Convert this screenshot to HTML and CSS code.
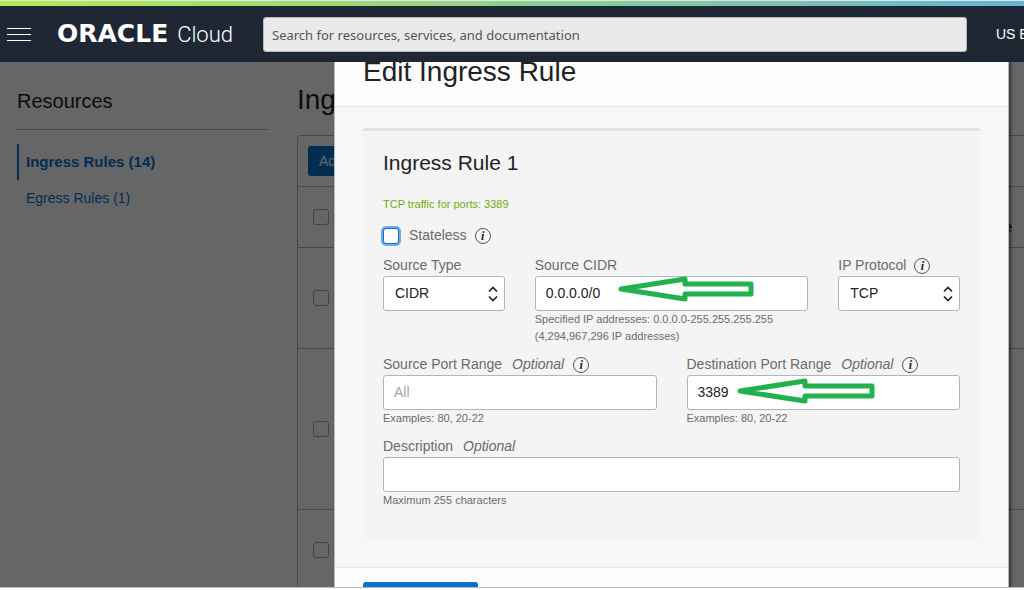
FILE: index.html
```
<!DOCTYPE html>
<html lang="en">
<head>
<meta charset="utf-8">
<title>Oracle Cloud - Edit Ingress Rule</title>
<meta name="viewport" content="width=device-width, initial-scale=1">
<link rel="stylesheet" href="styles.css">
</head>
<body>
<div class="accent"></div>
<header class="topbar">
  <button class="burger" type="button" aria-label="Menu"><span></span><span></span><span></span></button>
  <a class="logo" href="#"><span class="logo-brand">ORACLE</span><span class="logo-product">Cloud</span></a>
  <input class="search" type="search" aria-label="Search" placeholder="Search for resources, services, and documentation">
  <span class="region">US East</span>
</header>

<main class="stage">
  <div class="page">
    <nav class="sidebar">
      <h2 class="sidebar-title">Resources</h2>
      <a class="side-link active" href="#">Ingress Rules (14)</a>
      <a class="side-link" href="#">Egress Rules (1)</a>
    </nav>
    <section class="rules">
      <h1 class="rules-title">Ingress Rules</h1>
      <div class="panel">
        <div class="toolbar"><button class="primary" type="button">Add</button></div>
        <table class="rules-table">
          <tr class="row-head"><td><input class="check" type="checkbox" aria-label="Select all"></td><th>Range</th></tr>
          <tr class="row-medium"><td><input class="check" type="checkbox" aria-label="Select rule 1"></td><td></td></tr>
          <tr class="row-tall"><td><input class="check" type="checkbox" aria-label="Select rule 2"></td><td></td></tr>
          <tr class="row-last"><td><input class="check" type="checkbox" aria-label="Select rule 3"></td><td></td></tr>
        </table>
      </div>
    </section>
  </div>
  <div class="backdrop"></div>

  <div class="dialog" role="dialog" aria-labelledby="dialog-title">
    <div class="dialog-head"><h1 class="dialog-title" id="dialog-title">Edit Ingress Rule</h1></div>
    <div class="dialog-body">
      <form class="card">
        <h2 class="card-title">Ingress Rule 1</h2>
        <p class="summary">TCP traffic for ports: 3389</p>
        <div class="stateless">
          <input class="check focused" type="checkbox" id="stateless">
          <label for="stateless">Stateless</label>
          <button class="info" type="button" aria-label="About stateless">i</button>
        </div>
        <div class="fields">
          <div class="field">
            <div class="label-row"><label for="source-type">Source Type</label></div>
            <div class="control">
              <select class="box" id="source-type"><option>CIDR</option></select>
              <svg class="chevrons" width="10" height="16" viewBox="0 0 10 16"><path d="M1 5.5 5 1.5 9 5.5M1 10.5 5 14.5 9 10.5"/></svg>
            </div>
          </div>
          <div class="field wide">
            <div class="label-row"><label for="source-cidr">Source CIDR</label></div>
            <div class="control">
              <input class="box" id="source-cidr" type="text" value="0.0.0.0/0">
              <svg class="arrow arrow-cidr" width="138" height="26" viewBox="0 0 138 26"><path d="M4 13 68 3V8H134V18H68V23Z"/></svg>
            </div>
            <p class="hint">Specified IP addresses: 0.0.0.0-255.255.255.255<br>(4,294,967,296 IP addresses)</p>
          </div>
          <div class="field">
            <div class="label-row"><label for="protocol">IP Protocol</label><button class="info" type="button" aria-label="About IP protocol">i</button></div>
            <div class="control">
              <select class="box" id="protocol"><option>TCP</option></select>
              <svg class="chevrons" width="10" height="16" viewBox="0 0 10 16"><path d="M1 5.5 5 1.5 9 5.5M1 10.5 5 14.5 9 10.5"/></svg>
            </div>
          </div>
          <div class="field wide">
            <div class="label-row"><label for="source-port">Source Port Range</label><em>Optional</em><button class="info" type="button" aria-label="About source port range">i</button></div>
            <div class="control"><input class="box" id="source-port" type="text" placeholder="All"></div>
            <p class="hint">Examples: 80, 20-22</p>
          </div>
          <div class="field wide">
            <div class="label-row"><label for="dest-port">Destination Port Range</label><em>Optional</em><button class="info" type="button" aria-label="About destination port range">i</button></div>
            <div class="control">
              <input class="box" id="dest-port" type="text" value="3389">
              <svg class="arrow arrow-port" width="140" height="26" viewBox="0 0 140 26"><path d="M4 13 69 3V8H136V18H69V23Z"/></svg>
            </div>
            <p class="hint">Examples: 80, 20-22</p>
          </div>
          <div class="field full">
            <div class="label-row"><label for="description">Description</label><em>Optional</em></div>
            <div class="control"><input class="box" id="description" type="text"></div>
            <p class="hint">Maximum 255 characters</p>
          </div>
        </div>
      </form>
    </div>
    <div class="dialog-foot"><button class="save" type="button" aria-label="Save"></button></div>
  </div>
</main>
</body>
</html>
```
FILE: styles.css
```
* { box-sizing: border-box; }

body {
  margin: 0;
  height: 100vh;
  display: flex;
  flex-direction: column;
  overflow: hidden;
  background: #fff;
  color: #222;
  font: 14px/20px "Liberation Sans", Arial, sans-serif;
}

h1, h2, p { margin: 0; font-weight: 400; }
a { text-decoration: none; }
button, input, select { font: inherit; margin: 0; }

.accent {
  flex: none;
  height: 6px;
  border-top: 1px solid #e4e4e4;
  background: linear-gradient(90deg, #b4ec51, #99da78 33%, #7cc4b0 75%, #68b2d8);
}

/* Top bar */
.topbar {
  flex: none;
  height: 56px;
  padding-left: 7px;
  display: flex;
  align-items: center;
  background: #1e2733;
  color: #fff;
}
.burger {
  width: 24px;
  height: 13px;
  margin-right: 26px;
  padding: 0;
  border: 0;
  background: none;
  display: flex;
  flex-direction: column;
  justify-content: space-between;
}
.burger span { width: 100%; height: 1px; background: #fff; }
.logo {
  width: 176px;
  margin-right: 30px;
  display: flex;
  align-items: baseline;
  justify-content: space-between;
  color: #fff;
  line-height: 28px;
}
.logo-brand { font-family: "DejaVu Sans", sans-serif; font-size: 25px; font-weight: 700; }
.logo-product { font-family: Roboto, sans-serif; font-size: 22px; font-weight: 300; }
.search {
  flex: 1;
  min-width: 0;
  height: 35px;
  padding: 2px 8px 0;
  appearance: none;
  border: 1px solid #b4b9c1;
  border-radius: 3px;
  background: #eaeaea;
  font-family: "Noto Sans", sans-serif;
  font-size: 13px;
}
.search::placeholder { color: #555; opacity: 1; }
.region { width: 28px; margin-left: 29px; overflow: hidden; white-space: nowrap; }

/* Page under the dialog */
.stage { position: relative; flex: 1; min-height: 0; overflow: hidden; border-bottom: 1px solid #b5b9c0; margin-bottom: 2px; }
.page { height: 100%; padding: 0 0 0 17px; display: flex; gap: 28px; }
.sidebar { flex: none; width: 252px; padding-top: 24px; display: flex; flex-direction: column; }
.sidebar-title { padding-bottom: 13px; margin-bottom: 14px; border-bottom: 1px solid #b5b9c0; font-size: 20px; line-height: 30px; }
.side-link { padding: 8px 9px; color: #0572ce; }
.side-link.active { padding-left: 7px; border-left: 2px solid #0572ce; font-size: 15px; font-weight: 700; }
.rules { flex: 1; min-width: 0; padding-top: 20px; }
.rules-title { font-size: 28px; line-height: 36px; margin-bottom: 17px; }
.panel { border: 1px solid #b5b9c0; border-right: 0; border-top-left-radius: 3px; }
.toolbar { height: 50px; padding: 10px; }
.primary { height: 30px; padding: 0 11px; border: 0; border-radius: 3px; background: #0572ce; color: #fff; }
.rules-table { width: 100%; border-collapse: collapse; }
.rules-table td, .rules-table th { padding: 0 15px; border-top: 1px solid #b5b9c0; }
.rules-table th { padding-right: 12px; text-align: right; font-weight: 700; padding-top: 20px; }
.rules-table .check { display: block; }
.row-head { height: 61px; }
.row-medium { height: 101px; }
.row-tall { height: 161px; }
.row-last { height: 81px; }
.backdrop { position: absolute; inset: 0; background: rgba(0, 0, 0, .6); }

.check {
  flex: none;
  width: 16px;
  height: 16px;
  appearance: none;
  border: 1px solid #a5a9b2;
  border-radius: 3px;
  background: #fff;
}
.check.focused { border-color: #0572ce; box-shadow: 0 0 0 2px #74aae2; }

/* Dialog */
.dialog {
  position: absolute;
  inset: 0 15px auto 334px;
  border: solid #b5b9c0;
  border-width: 0 1px;
  background: #f7f7f7;
  box-shadow: 2px 0 3px rgba(0, 0, 0, .5);
}
.dialog-head { height: 45px; padding: 0 28px; display: flex; align-items: flex-end; border-bottom: 1px solid #e4e4e6; background: #fcfcfc; }
.dialog-title { padding-bottom: 16px; font-size: 28px; line-height: 36px; }
.dialog-body { padding: 21px 28px 27px; }
.card { padding: 20px 20px 31px; border-top: 3px solid #e1e2e6; border-radius: 3px; background: #f4f4f4; }
.card-title { margin-bottom: 21px; font-size: 21px; line-height: 24px; }
.summary { margin-bottom: 13px; color: #6fae0a; font-size: 11px; line-height: 17px; }
.stateless { display: flex; align-items: center; height: 20px; margin-bottom: 10px; color: #6b6b6b; }
.stateless label { margin-left: 10px; padding-bottom: 2px; }
.info {
  flex: none;
  width: 16px;
  height: 16px;
  margin-left: 8px;
  padding: 0;
  border: 1px solid #555;
  border-radius: 50%;
  background: none;
  color: #222;
  font: italic 700 12px/13px "Liberation Serif", serif;
}
.fields { display: grid; grid-template-columns: repeat(4, 1fr); gap: 10px 30px; }
.field { min-width: 0; }
.wide { grid-column: span 2; }
.full { grid-column: 1 / -1; }
.label-row { height: 20px; display: flex; align-items: center; color: #6b6b6b; white-space: nowrap; }
.label-row label, .label-row em { padding-bottom: 2px; }
.label-row em { margin-left: 10px; }
.label-row em + .info { margin-left: 9px; }
.control { position: relative; }
.box {
  display: block;
  width: 100%;
  height: 35px;
  padding: 0 10px 2px;
  appearance: none;
  border: 1px solid #b0b4be;
  border-radius: 3px;
  background: #fff;
  color: #222;
}
select.box { padding-left: 11px; }
.box::placeholder { color: #a5a5a5; opacity: 1; }
.chevrons { position: absolute; top: 10px; right: 7px; fill: none; stroke: #222; stroke-width: 1.7; pointer-events: none; }
.arrow { position: absolute; fill: none; stroke: #22b14c; stroke-width: 5; stroke-linejoin: round; pointer-events: none; }
.arrow-cidr { top: 0; left: 82px; }
.arrow-port { top: 3px; left: 49px; }
.hint { color: #6b6b6b; font-size: 11px; line-height: 17px; }
.dialog-foot { height: 60px; padding: 14px 28px; border-top: 1px solid #e4e4e6; background: #fcfcfc; }
.save { width: 115px; height: 32px; border: 0; border-radius: 3px; background: #0572ce; }
```
